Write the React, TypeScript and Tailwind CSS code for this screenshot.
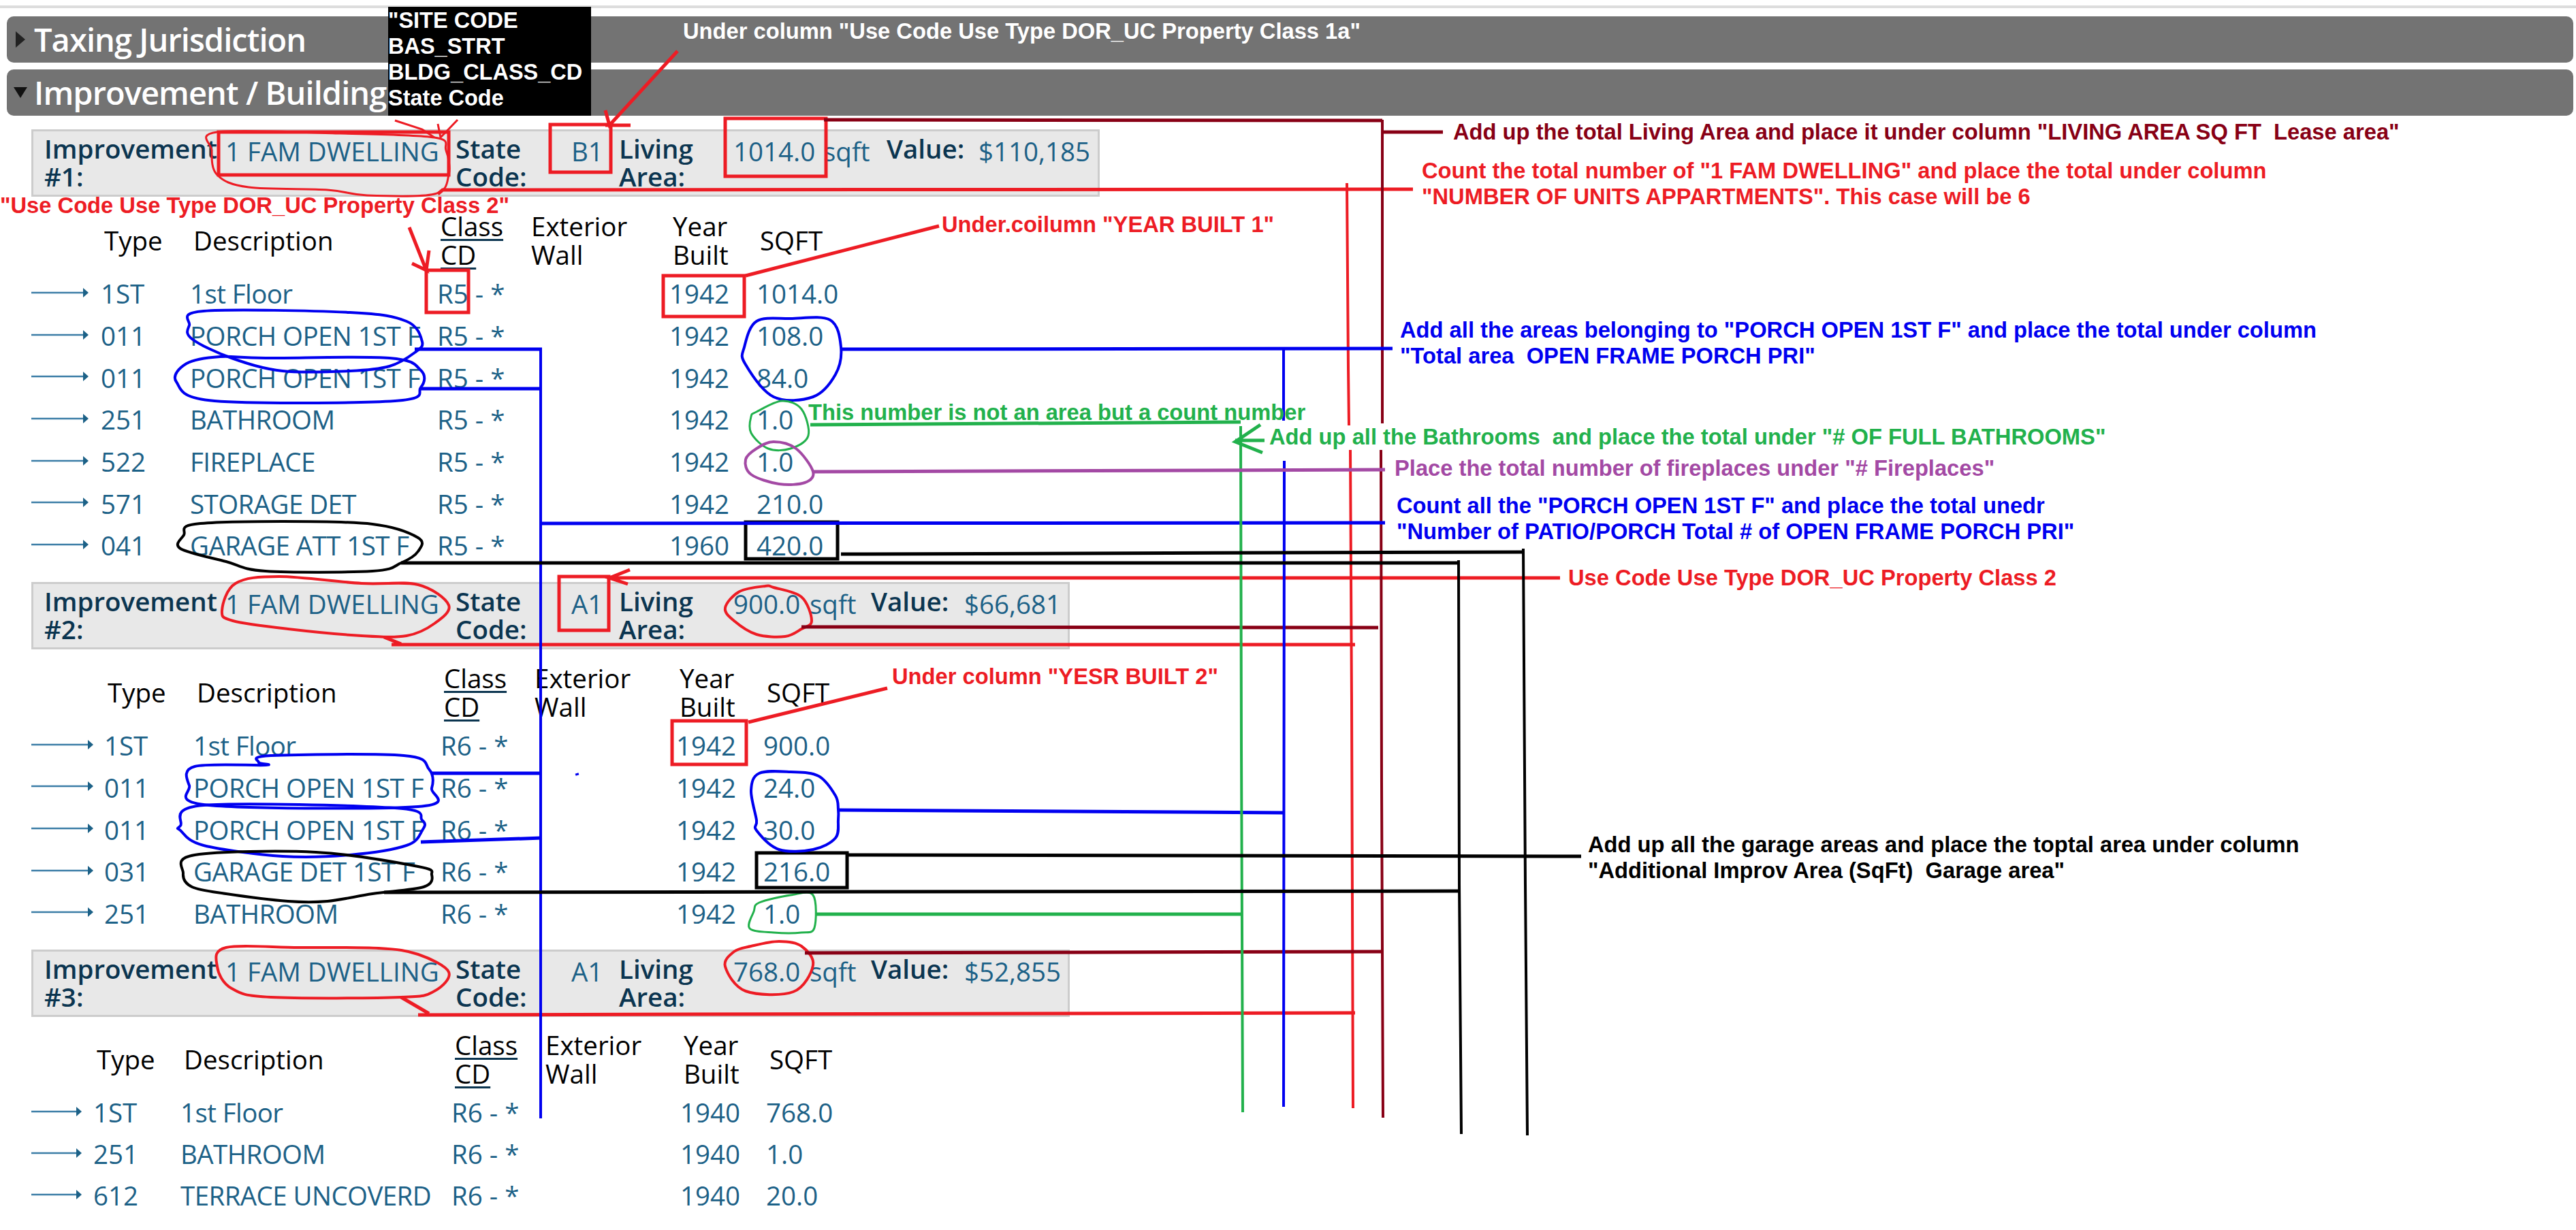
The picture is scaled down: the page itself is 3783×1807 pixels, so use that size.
import React from "react";

type Pt = [number, number];

const improvements = [
  {
    num: "#1:",
    use: "1 FAM DWELLING",
    state: "B1",
    area: "1014.0",
    value: "$110,185",
    panel: "mt-[20px] w-[1569px] grid-cols-[266px_338px_170px_70px_168px_132px_93px_135px_1fr]",
    head: "mt-[22px]",
    cols: "grid-cols-[102px_131px_363px_133px_208px_128px_1fr]",
    row: "h-[61.7px]",
    arrow: 84,
    rows: [
      ["1ST", "1st Floor", "R5 - *", "1942", "1014.0"],
      ["011", "PORCH OPEN 1ST F", "R5 - *", "1942", "108.0"],
      ["011", "PORCH OPEN 1ST F", "R5 - *", "1942", "84.0"],
      ["251", "BATHROOM", "R5 - *", "1942", "1.0"],
      ["522", "FIREPLACE", "R5 - *", "1942", "1.0"],
      ["571", "STORAGE DET", "R5 - *", "1942", "210.0"],
      ["041", "GARAGE ATT 1ST F", "R5 - *", "1960", "420.0"],
    ],
  },
  {
    num: "#2:",
    use: "1 FAM DWELLING",
    state: "A1",
    area: "900.0",
    value: "$66,681",
    panel: "mt-[21px] w-[1525px] grid-cols-[266px_338px_170px_70px_168px_112px_90px_137px_1fr]",
    head: "mt-[21px]",
    cols: "grid-cols-[107px_131px_363px_133px_213px_128px_1fr]",
    row: "h-[61.7px]",
    arrow: 91,
    rows: [
      ["1ST", "1st Floor", "R6 - *", "1942", "900.0"],
      ["011", "PORCH OPEN 1ST F", "R6 - *", "1942", "24.0"],
      ["011", "PORCH OPEN 1ST F", "R6 - *", "1942", "30.0"],
      ["031", "GARAGE DET 1ST F", "R6 - *", "1942", "216.0"],
      ["251", "BATHROOM", "R6 - *", "1942", "1.0"],
    ],
  },
  {
    num: "#3:",
    use: "1 FAM DWELLING",
    state: "A1",
    area: "768.0",
    value: "$52,855",
    panel: "mt-[21px] w-[1525px] grid-cols-[266px_338px_170px_70px_168px_112px_90px_137px_1fr]",
    head: "mt-[20px]",
    cols: "grid-cols-[91px_128px_398px_133px_203px_126px_1fr]",
    row: "h-[61px]",
    arrow: 74,
    rows: [
      ["1ST", "1st Floor", "R6 - *", "1940", "768.0"],
      ["251", "BATHROOM", "R6 - *", "1940", "1.0"],
      ["612", "TERRACE UNCOVERD", "R6 - *", "1940", "20.0"],
    ],
  },
];

// hand-drawn circles, closed smooth loop through the points
function loop(p: Pt[]) {
  let d = `M${p[0][0]},${p[0][1]}`;
  for (let i = 0; i < p.length; i++) {
    const a = p[(i - 1 + p.length) % p.length];
    const b = p[i];
    const c = p[(i + 1) % p.length];
    const e = p[(i + 2) % p.length];
    d += ` C${b[0] + (c[0] - a[0]) / 6},${b[1] + (c[1] - a[1]) / 6} ${c[0] - (e[0] - b[0]) / 6},${c[1] - (e[1] - b[1]) / 6} ${c[0]},${c[1]}`;
  }
  return d;
}

const RED = "#ed1c24";
const DARK = "#880015";
const BLUE = "#0000f0";
const GREEN = "#22b14c";
const PURPLE = "#a349a4";

const circles: { c: string; w: number; p: Pt[] }[] = [
  { c: RED, w: 3, p: [[638, 202], [655, 221], [659, 257], [638, 285], [539, 287], [481, 279], [365, 275], [319, 257], [311, 221], [319, 194], [500, 196]] },
  { c: RED, w: 4, p: [[326, 897], [346, 857], [410, 847], [531, 857], [614, 859], [659, 889], [638, 916], [597, 934], [531, 934], [423, 924], [342, 912]] },
  { c: RED, w: 4, p: [[319, 1420], [332, 1392], [439, 1392], [556, 1393], [614, 1402], [659, 1428], [638, 1456], [589, 1465], [398, 1465], [340, 1452]] },
  { c: RED, w: 4, p: [[1065, 893], [1086, 869], [1124, 861], [1136, 863], [1177, 877], [1192, 912], [1177, 924], [1153, 935], [1111, 932], [1078, 912]] },
  { c: RED, w: 4, p: [[1078, 1398], [1065, 1420], [1095, 1456], [1165, 1457], [1194, 1418], [1177, 1390], [1144, 1383], [1103, 1390]] },
  { c: BLUE, w: 4, p: [[299, 457], [514, 459], [597, 472], [620, 502], [609, 518], [572, 538], [514, 545], [415, 545], [340, 526], [282, 498], [278, 478]] },
  { c: BLUE, w: 4, p: [[323, 524], [274, 534], [259, 561], [315, 589], [580, 589], [618, 569], [618, 544], [572, 526], [390, 526]] },
  { c: BLUE, w: 4, p: [[1111, 472], [1161, 468], [1219, 470], [1235, 510], [1227, 550], [1194, 583], [1136, 583], [1094, 534], [1093, 510]] },
  { c: BLUE, w: 4, p: [[390, 1124], [286, 1126], [278, 1154], [307, 1183], [614, 1185], [634, 1158], [630, 1130], [593, 1110], [398, 1110], [380, 1120]] },
  { c: BLUE, w: 4, p: [[299, 1183], [265, 1213], [265, 1220], [299, 1242], [415, 1258], [514, 1256], [597, 1242], [620, 1220], [620, 1205], [580, 1187]] },
  { c: BLUE, w: 4, p: [[1161, 1134], [1115, 1136], [1103, 1161], [1111, 1205], [1111, 1220], [1144, 1248], [1194, 1248], [1227, 1231], [1231, 1204], [1231, 1189], [1227, 1169], [1202, 1140]] },
  { c: GREEN, w: 3, p: [[1111, 605], [1148, 589], [1177, 601], [1187, 640], [1161, 659], [1128, 659], [1103, 636], [1103, 612]] },
  { c: GREEN, w: 3, p: [[1115, 1326], [1161, 1315], [1194, 1315], [1196, 1363], [1177, 1370], [1136, 1370], [1101, 1364], [1107, 1339]] },
  { c: PURPLE, w: 4, p: [[1111, 659], [1136, 649], [1169, 659], [1194, 693], [1182, 709], [1144, 711], [1103, 697], [1095, 675]] },
  { c: "#000", w: 4, p: [[286, 770], [415, 766], [547, 770], [614, 790], [614, 810], [589, 827], [547, 839], [390, 839], [332, 825], [265, 806], [270, 786]] },
  { c: "#000", w: 4, p: [[286, 1256], [464, 1252], [614, 1273], [634, 1285], [622, 1303], [547, 1313], [481, 1324], [423, 1324], [332, 1313], [282, 1303], [269, 1283]] },
];

const boxes: { c: string; x: number; y: number; w: number; h: number }[] = [
  { c: RED, x: 321, y: 194, w: 338, h: 63 },
  { c: RED, x: 808, y: 183, w: 89, h: 70 },
  { c: RED, x: 1065, y: 174, w: 148, h: 85 },
  { c: RED, x: 626, y: 397, w: 62, h: 62 },
  { c: RED, x: 974, y: 405, w: 119, h: 60 },
  { c: RED, x: 821, y: 847, w: 73, h: 79 },
  { c: RED, x: 987, y: 1059, w: 109, h: 64 },
  { c: "#000", x: 1095, y: 767, w: 135, h: 54 },
  { c: "#000", x: 1111, y: 1253, w: 133, h: 51 },
];

const lines: { c: string; w?: number; d: string }[] = [
  // red
  { c: RED, d: "M643,285 L650,279 L2075,278" },
  { c: RED, w: 3, d: "M580,177 L620,190 L638,202" },
  { c: RED, w: 3, d: "M672,176 L647,202 L643,182" },
  { c: RED, d: "M995,75 L895,184 L889,162 M889,184 L926,184" },
  { c: RED, d: "M601,334 L626,397 L605,387 M630,368 L626,397" },
  { c: RED, d: "M1095,405 L1379,332" },
  { c: RED, d: "M1099,1061 L1303,1011" },
  { c: RED, d: "M925,837 L895,849 L922,858 M895,849 L2291,849" },
  { c: RED, d: "M564,936 L589,946 M575,947 L1990,947" },
  { c: RED, d: "M589,1465 L630,1489 M614,1491 L1990,1488" },
  { c: RED, w: 4, d: "M1978,269 L1980,540 L1981,625 M1983,661 L1985,1030 L1987,1628" },
  // dark red
  { c: DARK, d: "M1210,176 L2030,177 M2030,194 L2119,194" },
  { c: DARK, w: 4, d: "M2030,176 L2030,622 M2028,661 L2029,1150 L2031,1642" },
  { c: DARK, d: "M1177,921 L2024,922" },
  { c: DARK, d: "M1182,1400 L2030,1398" },
  // blue
  { c: BLUE, d: "M609,513 L796,513 M618,571 L796,571 M1235,513 L2045,512 M794,769 L2034,768" },
  { c: BLUE, d: "M634,1136 L796,1136 M618,1237 L796,1231 M1231,1190 L1885,1194" },
  { c: BLUE, w: 4, d: "M794,513 L794,1643 M1885,513 L1885,618 M1886,677 L1885,1626" },
  { c: BLUE, w: 5, d: "M847,1136 L848,1139" },
  // green
  { c: GREEN, d: "M1190,624 L1822,620 M1198,1343 L1822,1343" },
  { c: GREEN, w: 4, d: "M1822,626 L1823,1100 L1825,1634" },
  { c: GREEN, d: "M1851,624 L1814,649 L1854,665 M1814,647 L1857,647" },
  // purple
  { c: PURPLE, d: "M1194,693 L2034,690" },
  // black
  { c: "#000", d: "M1235,814 L2237,811 M589,827 L2142,827 M1246,1256 L2322,1258 M564,1311 L2144,1309" },
  { c: "#000", w: 4, d: "M2142,823 L2143,1300 L2146,1666 M2237,806 L2240,1300 L2243,1668" },
];

function Arrow({ width }: { width: number }) {
  return (
    <svg width={width} height="16" viewBox={`0 0 ${width} 16`} className="mb-[3px] block">
      <path d={`M0,8 H${width - 6}`} stroke="#3b7da6" strokeWidth="2.5" />
      <path d={`M${width - 8},1 L${width},8 L${width - 8},15 Z`} fill="#1c6187" />
    </svg>
  );
}

function Annotations() {
  return (
    <svg width="3783" height="1807" viewBox="0 0 3783 1807" fill="none" className="pointer-events-none absolute left-0 top-0">
      {boxes.map((b, i) => (
        <rect key={i} x={b.x} y={b.y} width={b.w} height={b.h} stroke={b.c} strokeWidth="5" />
      ))}
      {circles.map((o, i) => (
        <path key={i} d={loop(o.p)} stroke={o.c} strokeWidth={o.w} />
      ))}
      {lines.map((l, i) => (
        <path key={i} d={l.d} stroke={l.c} strokeWidth={l.w ?? 5} />
      ))}
    </svg>
  );
}

function Note({ className, children }: { className: string; children: React.ReactNode }) {
  return (
    <div className={`absolute whitespace-pre font-['Liberation_Sans',Arial,sans-serif] text-[32.7px] font-bold leading-[38px] ${className}`}>
      {children}
    </div>
  );
}

function Bar({ title, open }: { title: string; open?: boolean }) {
  return (
    <div className="ml-[10px] flex h-[68px] w-[3769px] items-center rounded-[10px] bg-[#737373]">
      <div className="flex w-[40px] justify-center">
        {open ? (
          <svg width="20" height="16" viewBox="0 0 20 16">
            <path d="M0,0 H20 L10,16 Z" fill="#111" />
          </svg>
        ) : (
          <svg width="14" height="24" viewBox="0 0 14 24">
            <path d="M0,0 L14,12 L0,24 Z" fill="#222" />
          </svg>
        )}
      </div>
      <span className="text-[47px] font-semibold tracking-[-0.02em] text-white">{title}</span>
    </div>
  );
}

function Improvement({ item }: { item: (typeof improvements)[number] }) {
  const label = "text-[#0b3550] font-semibold";
  const val = "mt-[4px] text-[#1c6187]";
  return (
    <>
      <div className={`ml-[46px] grid h-[99px] border-[3px] border-[#cccccc] bg-[#e8e8e8] pl-[16px] pt-[5px] leading-[41px] ${item.panel}`}>
        <div className={label}>
          Improvement
          <br />
          {item.num}
        </div>
        <div className={val}>{item.use}</div>
        <div className={label}>
          State
          <br />
          Code:
        </div>
        <div className={val}>{item.state}</div>
        <div className={label}>
          Living
          <br />
          Area:
        </div>
        <div className={val}>{item.area}</div>
        <div className={val}>sqft</div>
        <div className={label}>Value:</div>
        <div className={val}>{item.value}</div>
      </div>

      <div className={`ml-[46px] grid items-center text-black ${item.head} ${item.cols}`}>
        <div />
        <div className="pl-[5px]">Type</div>
        <div className="pl-[5px]">Description</div>
        <div className="pl-[5px] underline decoration-[#0b3550] decoration-[3px] underline-offset-[4px]">
          Class
          <br />
          CD
        </div>
        <div className="pl-[5px]">
          Exterior
          <br />
          Wall
        </div>
        <div className="pl-[5px]">
          Year
          <br />
          Built
        </div>
        <div className="pl-[5px]">SQFT</div>
      </div>

      <div className="mt-[7px] ml-[46px]">
        {item.rows.map((r, i) => (
          <div key={i} className={`grid items-center pb-[3px] text-[#1c6187] ${item.cols} ${item.row}`}>
            <Arrow width={item.arrow} />
            <div>{r[0]}</div>
            <div className="whitespace-nowrap tracking-[-0.015em]">{r[1]}</div>
            <div>{r[2]}</div>
            <div />
            <div>{r[3]}</div>
            <div>{r[4]}</div>
          </div>
        ))}
      </div>
    </>
  );
}

export default function App() {
  return (
    <div className="relative h-[1807px] w-[3783px] overflow-hidden bg-white font-['Open_Sans',sans-serif] text-[38.5px] leading-[42px]">
      <div className="pt-[8px]">
        <div className="h-[4px] bg-[#dddddd]" />
        <div className="mt-[12px] flex flex-col gap-[10px]">
          <Bar title="Taxing Jurisdiction" />
          <Bar title="Improvement / Building" open />
        </div>
        {improvements.map((item) => (
          <Improvement key={item.num} item={item} />
        ))}
      </div>

      <Annotations />

      {/* field names box over the header bars */}
      <div className="absolute left-[570px] top-[10px] h-[160px] w-[298px] bg-black pt-[1px] font-['Liberation_Sans',Arial,sans-serif] text-[32.5px] font-bold leading-[38px] text-white">
        "SITE CODE
        <br />
        BAS_STRT
        <br />
        BLDG_CLASS_CD
        <br />
        State Code
      </div>

      <Note className="left-[1003px] top-[27px] text-white">Under column "Use Code Use Type DOR_UC Property Class 1a"</Note>
      <Note className="left-[0px] top-[283px] text-[#ed1c24]">"Use Code Use Type DOR_UC Property Class 2"</Note>
      <Note className="left-[1383px] top-[311px] text-[#ed1c24]">Under.coilumn "YEAR BUILT 1"</Note>
      <Note className="left-[1310px] top-[975px] text-[#ed1c24]">Under column "YESR BUILT 2"</Note>
      <Note className="left-[2134px] top-[175px] text-[#880015]">Add up the total Living Area and place it under column "LIVING AREA SQ FT  Lease area"</Note>
      <Note className="left-[2088px] top-[232px] text-[#ed1c24]">
        Count the total number of "1 FAM DWELLING" and place the total under column
        <br />
        "NUMBER OF UNITS APPARTMENTS". This case will be 6
      </Note>
      <Note className="left-[2056px] top-[466px] text-[#0000f0]">
        Add all the areas belonging to "PORCH OPEN 1ST F" and place the total under column
        <br />
        "Total area  OPEN FRAME PORCH PRI"
      </Note>
      <Note className="left-[1187px] top-[587px] text-[#22b14c]">This number is not an area but a count number</Note>
      <Note className="left-[1864px] top-[623px] text-[#22b14c]">Add up all the Bathrooms  and place the total under "# OF FULL BATHROOMS"</Note>
      <Note className="left-[2048px] top-[669px] text-[#a349a4]">Place the total number of fireplaces under "# Fireplaces"</Note>
      <Note className="left-[2051px] top-[724px] text-[#0000f0]">
        Count all the "PORCH OPEN 1ST F" and place the total unedr
        <br />
        "Number of PATIO/PORCH Total # of OPEN FRAME PORCH PRI"
      </Note>
      <Note className="left-[2303px] top-[830px] text-[#ed1c24]">Use Code Use Type DOR_UC Property Class 2</Note>
      <Note className="left-[2332px] top-[1222px] text-black">
        Add up all the garage areas and place the toptal area under column
        <br />
        "Additional Improv Area (SqFt)  Garage area"
      </Note>
    </div>
  );
}
